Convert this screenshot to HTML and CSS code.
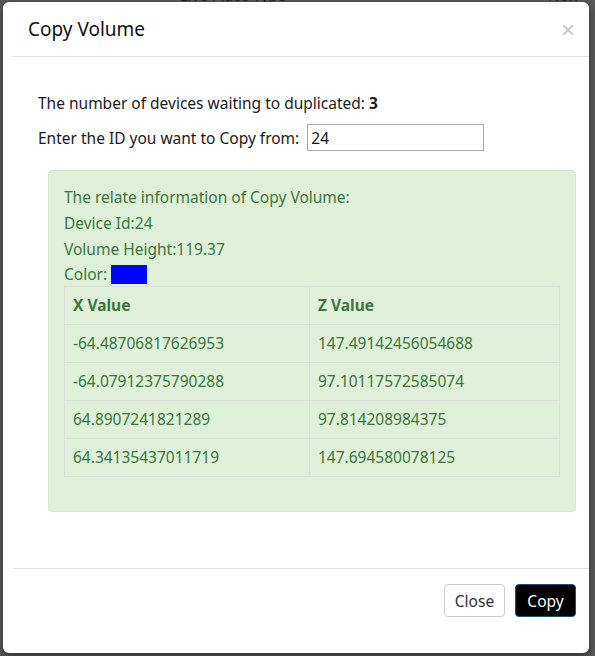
FILE: index.html
```html
<!DOCTYPE html>
<html>
<head>
<meta charset="utf-8">
<link rel="stylesheet" href="styles.css">
</head>
<body>
<div class="under">
  <span class="under-a">Live Place Type</span>
  <span class="under-b">New</span>
</div>
<div class="modal">
  <div class="modal-header">
    <h4 class="modal-title">Copy Volume</h4>
    <span class="close">&times;</span>
  </div>
  <div class="modal-body">
    <p class="line">The number of devices waiting to duplicated: <b>3</b></p>
    <div class="id-row">
      <label class="id-label">Enter the ID you want to Copy from:</label>
      <input class="id-input" type="text" value="24">
    </div>
    <div class="alert">
      <div class="info">The relate information of Copy Volume:</div>
      <div class="info">Device Id:24</div>
      <div class="info">Volume Height:119.37</div>
      <div class="info color-line">Color: <span class="swatch"></span></div>
      <table class="tbl">
        <thead>
          <tr><th class="col-x">X Value</th><th>Z Value</th></tr>
        </thead>
        <tbody>
          <tr><td>-64.48706817626953</td><td>147.49142456054688</td></tr>
          <tr><td>-64.07912375790288</td><td>97.10117572585074</td></tr>
          <tr><td>64.8907241821289</td><td>97.814208984375</td></tr>
          <tr><td>64.34135437011719</td><td>147.694580078125</td></tr>
        </tbody>
      </table>
    </div>
  </div>
  <div class="modal-footer">
    <button class="btn btn-default">Close</button>
    <button class="btn btn-dark">Copy</button>
  </div>
</div>
</body>
</html>
```
FILE: styles.css
```css
html, body {
  margin: 0;
  padding: 0;
}
body {
  background: #5a5a5a;
  font-family: "Noto Sans", "Open Sans", sans-serif;
  font-size: 15.5px;
  color: #1a1a1a;
  width: 595px;
  height: 656px;
  overflow: hidden;
}
.under {
  height: 2px;
  overflow: hidden;
  display: flex;
  align-items: flex-end;
  font-size: 15px;
  line-height: 13px;
  color: #1c1c1c;
}
.under-a {
  margin-left: 180px;
}
.under-b {
  margin-left: 262px;
}
.modal {
  margin-left: 3px;
  width: 586px;
  height: 651px;
  background: #fff;
  border-radius: 6px;
  box-shadow: 0 3px 9px rgba(0, 0, 0, 0.5);
  display: flex;
  flex-direction: column;
  box-sizing: border-box;
}
.modal-header {
  margin-left: 9px;
  padding: 14px 14px 13px 16px;
  border-bottom: 1px solid #e5e5e5;
  display: flex;
  align-items: center;
}
.modal-title {
  margin: 0;
  font-size: 19px;
  font-weight: normal;
  line-height: 27px;
  color: #111;
}
.close {
  margin-left: auto;
  font-size: 24px;
  line-height: 20px;
  color: #c4c4c4;
  font-family: "Liberation Sans", Arial, sans-serif;
  font-weight: normal;
}
.modal-body {
  flex: 1;
  padding: 36px 13px 0 35px;
}
.line {
  margin: 0;
  line-height: 21px;
}
.id-row {
  margin-top: 10px;
  display: flex;
  align-items: center;
  height: 27px;
}
.id-label {
  margin-right: 8px;
}
.id-input {
  width: 177px;
  height: 27px;
  box-sizing: border-box;
  border: 1px solid #a9a9a9;
  padding: 1px 3px 0;
  font-family: "Noto Sans", "Open Sans", sans-serif;
  font-size: 15.5px;
  color: #111;
  outline: none;
}
.alert {
  margin-top: 19px;
  margin-left: 10px;
  background: #dff0d8;
  border: 1px solid #d6e9c6;
  border-radius: 4px;
  padding: 13px 15px 34px;
  color: #3c763d;
}
.info {
  line-height: 26px;
}
.color-line {
  line-height: 24px;
  display: flex;
  align-items: center;
}
.swatch {
  display: inline-block;
  width: 36px;
  height: 19px;
  background: #0000ff;
  margin-left: 4px;
}
.tbl {
  width: 100%;
  border-collapse: collapse;
  font-size: 15.5px;
}
.tbl th, .tbl td {
  border: 1px solid #dddddd;
  padding: 8px 8px;
  height: 21px;
  line-height: 21px;
  text-align: left;
}
.tbl th {
  font-weight: bold;
}
.col-x {
  width: 228px;
}
.modal-footer {
  margin-left: 10px;
  border-top: 1px solid #e5e5e5;
  padding: 15px 13px 36px;
  display: flex;
  justify-content: flex-end;
  gap: 10px;
}
.btn {
  width: 61px;
  height: 33px;
  box-sizing: border-box;
  border-radius: 4px;
  font-family: "Noto Sans", "Open Sans", sans-serif;
  font-size: 15.5px;
  padding: 0;
  cursor: pointer;
}
.btn-default {
  background: #fff;
  border: 1px solid #cccccc;
  color: #333;
}
.btn-dark {
  background: #000;
  border: 1px solid #204d74;
  color: #fff;
}
```
